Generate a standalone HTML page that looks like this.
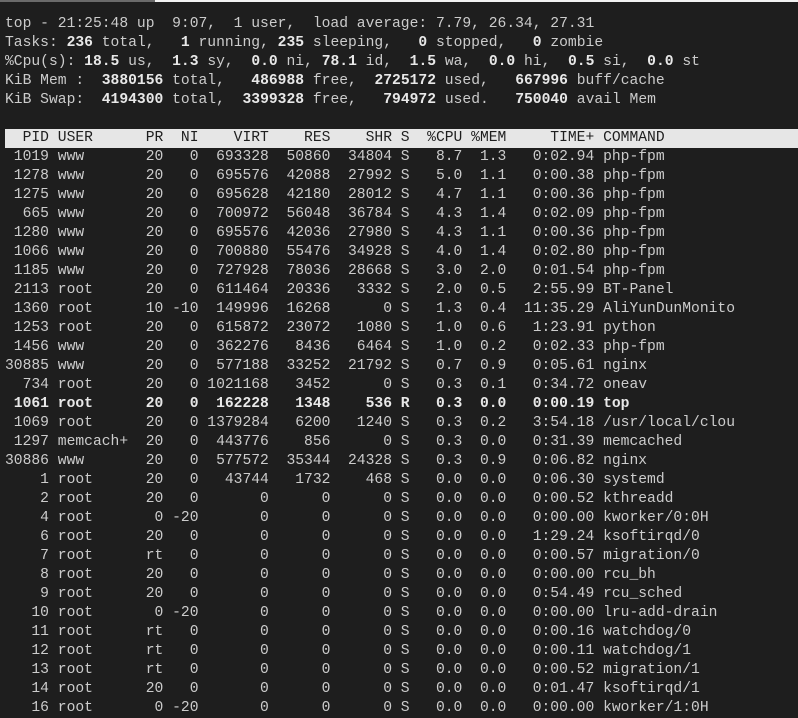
<!DOCTYPE html>
<html><head><meta charset="utf-8"><style>
html,body{margin:0;padding:0;background:#1e1e1e;width:798px;height:710px;overflow:hidden}
.strip1{position:absolute;left:0;top:0;width:155px;height:2px;background:#6a6a6a}
.strip2{position:absolute;left:155px;top:0;width:643px;height:2px;background:#f2f2f2}
pre{position:absolute;left:5px;top:15px;margin:0;font-family:"Liberation Mono",monospace;font-size:14.67px;line-height:19px;color:#cccccc;white-space:pre}
b{font-weight:bold;color:#e8e8e8}
.hd{background:#e6e6e6;color:#1e1e1e;display:inline-block;width:793px}
</style></head><body>
<div class="strip1"></div><div class="strip2"></div>
<pre>top - 21:25:48 up  9:07,  1 user,  load average: 7.79, 26.34, 27.31
Tasks: <b>236</b> total,   <b>1</b> running, <b>235</b> sleeping,   <b>0</b> stopped,   <b>0</b> zombie
%Cpu(s): <b>18.5</b> us,  <b>1.3</b> sy,  <b>0.0</b> ni, <b>78.1</b> id,  <b>1.5</b> wa,  <b>0.0</b> hi,  <b>0.5</b> si,  <b>0.0</b> st
KiB Mem :  <b>3880156</b> total,   <b>486988</b> free,  <b>2725172</b> used,   <b>667996</b> buff/cache
KiB Swap:  <b>4194300</b> total,  <b>3399328</b> free,   <b>794972</b> used.   <b>750040</b> avail Mem

<span class="hd">  PID USER      PR  NI    VIRT    RES    SHR S  %CPU %MEM     TIME+ COMMAND</span>
 1019 www       20   0  693328  50860  34804 S   8.7  1.3   0:02.94 php-fpm
 1278 www       20   0  695576  42088  27992 S   5.0  1.1   0:00.38 php-fpm
 1275 www       20   0  695628  42180  28012 S   4.7  1.1   0:00.36 php-fpm
  665 www       20   0  700972  56048  36784 S   4.3  1.4   0:02.09 php-fpm
 1280 www       20   0  695576  42036  27980 S   4.3  1.1   0:00.36 php-fpm
 1066 www       20   0  700880  55476  34928 S   4.0  1.4   0:02.80 php-fpm
 1185 www       20   0  727928  78036  28668 S   3.0  2.0   0:01.54 php-fpm
 2113 root      20   0  611464  20336   3332 S   2.0  0.5   2:55.99 BT-Panel
 1360 root      10 -10  149996  16268      0 S   1.3  0.4  11:35.29 AliYunDunMonito
 1253 root      20   0  615872  23072   1080 S   1.0  0.6   1:23.91 python
 1456 www       20   0  362276   8436   6464 S   1.0  0.2   0:02.33 php-fpm
30885 www       20   0  577188  33252  21792 S   0.7  0.9   0:05.61 nginx
  734 root      20   0 1021168   3452      0 S   0.3  0.1   0:34.72 oneav
<b> 1061 root      20   0  162228   1348    536 R   0.3  0.0   0:00.19 top</b>
 1069 root      20   0 1379284   6200   1240 S   0.3  0.2   3:54.18 /usr/local/clou
 1297 memcach+  20   0  443776    856      0 S   0.3  0.0   0:31.39 memcached
30886 www       20   0  577572  35344  24328 S   0.3  0.9   0:06.82 nginx
    1 root      20   0   43744   1732    468 S   0.0  0.0   0:06.30 systemd
    2 root      20   0       0      0      0 S   0.0  0.0   0:00.52 kthreadd
    4 root       0 -20       0      0      0 S   0.0  0.0   0:00.00 kworker/0:0H
    6 root      20   0       0      0      0 S   0.0  0.0   1:29.24 ksoftirqd/0
    7 root      rt   0       0      0      0 S   0.0  0.0   0:00.57 migration/0
    8 root      20   0       0      0      0 S   0.0  0.0   0:00.00 rcu_bh
    9 root      20   0       0      0      0 S   0.0  0.0   0:54.49 rcu_sched
   10 root       0 -20       0      0      0 S   0.0  0.0   0:00.00 lru-add-drain
   11 root      rt   0       0      0      0 S   0.0  0.0   0:00.16 watchdog/0
   12 root      rt   0       0      0      0 S   0.0  0.0   0:00.11 watchdog/1
   13 root      rt   0       0      0      0 S   0.0  0.0   0:00.52 migration/1
   14 root      20   0       0      0      0 S   0.0  0.0   0:01.47 ksoftirqd/1
   16 root       0 -20       0      0      0 S   0.0  0.0   0:00.00 kworker/1:0H</pre>
</body></html>
